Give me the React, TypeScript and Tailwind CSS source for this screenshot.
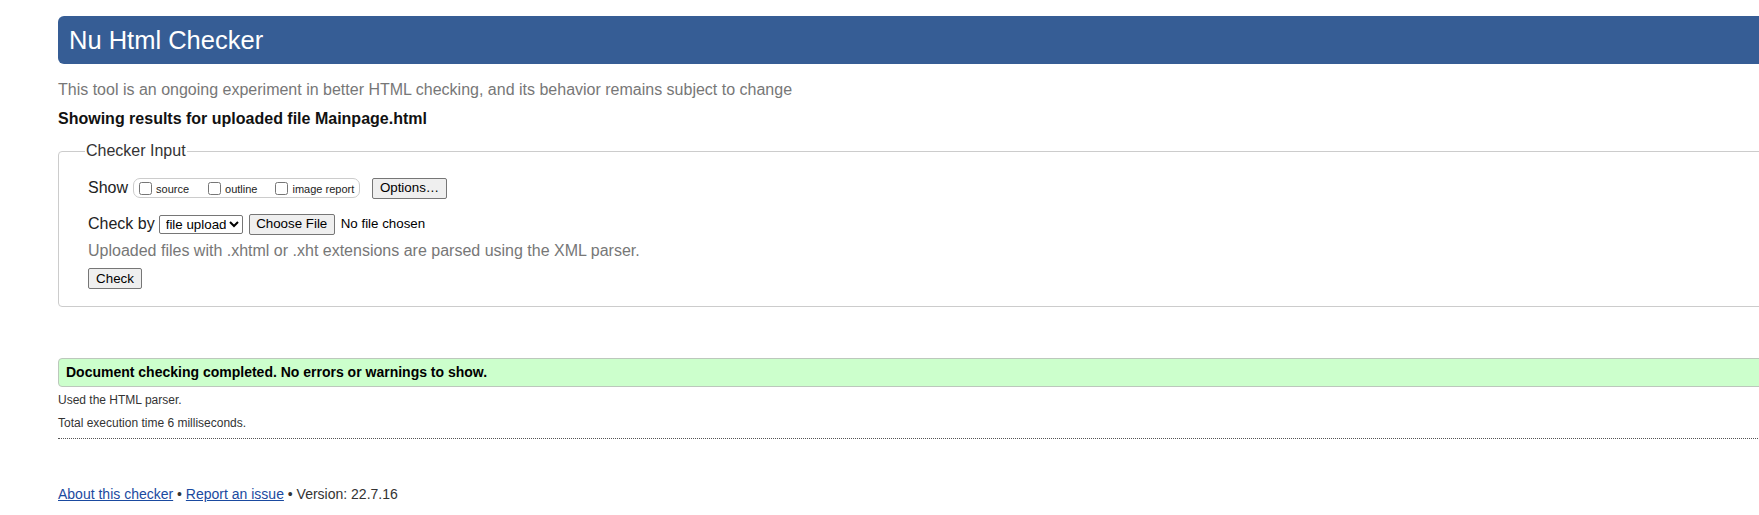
import React from 'react';

function Btn({ children, className = '' }: { children: React.ReactNode; className?: string }) {
  return (
    <button
      type="button"
      className={`flex h-[21px] items-center justify-center rounded-[2px] border border-[#767676] bg-[#efefef] px-[6px] text-[13.33px] text-black ${className}`}
    >
      {children}
    </button>
  );
}

function Box({ label, className = '' }: { label: string; className?: string }) {
  return (
    <label className={`flex items-center ${className}`}>
      <input type="checkbox" className="m-0 h-[13px] w-[13px]" />
      <span className="ml-[4px] mt-[3px] text-[11px] leading-[13px] text-[#222]">{label}</span>
    </label>
  );
}

export default function App() {
  return (
    <div className="h-[515px] w-full overflow-hidden bg-white font-['Liberation_Sans',Arial,sans-serif] text-[#222]">
      <div className="ml-[58px] w-[1760px] pt-[16px]">
        <h1 className="h-[48px] rounded-l-[6px] bg-[#365d95] pl-[11px] text-[25.5px] font-normal leading-[48px] text-white">
          Nu Html Checker
        </h1>
        <p className="mt-[16px] text-[16px] leading-[20px] text-[#777]">
          This tool is an ongoing experiment in better HTML checking, and its behavior remains subject to change
        </p>
        <p className="mt-[9px] text-[16px] font-bold leading-[20px] text-[#111]">
          Showing results for uploaded file Mainpage.html
        </p>

        {/* Checker input */}
        <fieldset className="mt-[12px] rounded-l-[4px] border border-[#ccc] pb-[17px] pl-[29px]">
          <legend className="-ml-[3px] px-[1px] text-[16px] leading-[20px] text-[#333]">Checker Input</legend>
          <div className="mt-[16px] flex h-[22px] items-center">
            <span className="text-[16px] leading-[20px]">Show</span>
            <div className="ml-[5px] flex h-[20px] w-[227px] items-center rounded-[7px] border border-[#ccc] pl-[5px]">
              <Box label="source" />
              <Box label="outline" className="ml-[19px]" />
              <Box label="image report" className="ml-[18px]" />
            </div>
            <Btn className="ml-[12px] w-[75px]">Options…</Btn>
          </div>
          <div className="mt-[14px] flex h-[22px] items-center">
            <span className="text-[16px] leading-[20px]">Check by</span>
            <select className="ml-[4px] h-[19px] w-[84px] rounded-[2px] border border-[#767676] bg-white pl-[2px] text-[13.33px] text-black">
              <option>file upload</option>
            </select>
            <Btn className="ml-[6px] w-[86px]">Choose File</Btn>
            <span className="ml-[6px] text-[13.33px] text-black">No file chosen</span>
          </div>
          <p className="mt-[6px] text-[16px] leading-[20px] text-[#777]">
            Uploaded files with .xhtml or .xht extensions are parsed using the XML parser.
          </p>
          <Btn className="mt-[7px] h-[20px] w-[54px]">Check</Btn>
        </fieldset>

        {/* Results */}
        <div className="mt-[51px] h-[29px] rounded-l-[4px] border border-[#bcc8bc] bg-[#ccffcc] pl-[7px] text-[14px] font-bold leading-[27px] text-black">
          Document checking completed. No errors or warnings to show.
        </div>
        <div className="border-b border-dotted border-[#555] pb-[7px]">
          <p className="mt-[5px] text-[12px] leading-[16px] text-[#333]">Used the HTML parser.</p>
          <p className="mt-[7px] text-[12px] leading-[16px] text-[#333]">Total execution time 6 milliseconds.</p>
        </div>

        <p className="mt-[47px] text-[14px] leading-[17px] text-[#333]">
          <a href="#" className="text-[#1a4aa0] underline">About this checker</a>
          {' • '}
          <a href="#" className="text-[#1a4aa0] underline">Report an issue</a>
          {' • Version: 22.7.16'}
        </p>
      </div>
    </div>
  );
}
